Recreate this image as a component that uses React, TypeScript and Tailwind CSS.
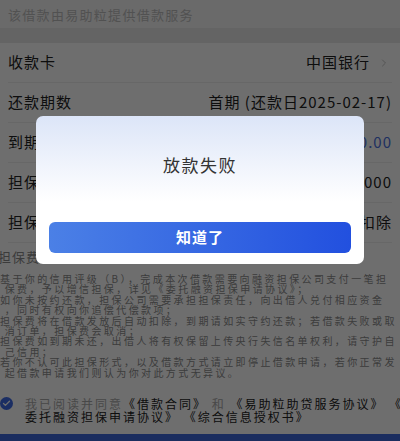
import { ChevronRight, Check } from 'lucide-react';

const ROWS = [
  { label: '收款卡', value: '中国银行', arrow: true },
  { label: '还款期数', value: '首期 (还款日2025-02-17)' },
  { label: '到期应还', value: '¥10,300.00', blue: true },
  { label: '担保费', value: '¥128.5000' },
  { label: '担保费扣除方式', value: '放款后自动扣除' },
];

const NOTICE = [
  '基于你的信用评级（B），完成本次借款需要向融资担保公司支付一笔担',
  ' 保费，予以增信担保，详见《委托融资担保申请协议》；',
  '如你未按约还款，担保公司需要承担担保责任，向出借人兑付相应资金',
  ' ，同时有权向你追偿代偿款项；',
  '担保费将在借款发放后自动扣除，到期请如实守约还款；若借款失败或取',
  ' 消订单，担保费会取消；',
  '担保费如到期未还，出借人将有权保留上传央行失信名单权利，请守护自',
  ' 己信用；',
  '若你不认可此担保形式，以及借款方式请立即停止借款申请，若你正常发',
  ' 起借款申请我们则认为你对此方式无异议。',
];

export default function App() {
  return (
    <div className="relative w-[400px] h-[441px] overflow-hidden bg-white font-['Noto_Sans_CJK_SC','Noto_Sans',sans-serif]">
      {/* 顶部提示 */}
      <div className="h-[28px] bg-[#f5f5f5] flex items-center px-2">
        <p className="text-[13px] tracking-[1.3px] text-[#bdbdbd] leading-none">该借款由易助粒提供借款服务</p>
      </div>
      <div className="h-[15px] bg-[#e8e8e8]" />

      {/* 借款信息 */}
      <div className="bg-white">
        {ROWS.map((row) => (
          <div key={row.label} className="h-[40px] mx-2 flex items-center justify-between border-b border-[#eeeeee]">
            <span className="text-[15px] tracking-[1px] text-[#222]">{row.label}</span>
            <span className="flex items-center gap-[8px]">
              <span className={`text-[15px] tracking-[1px] ${row.blue ? 'text-[#4a70e0]' : 'text-[#222]'}`}>{row.value}</span>
              {row.arrow && <ChevronRight size={12} strokeWidth={2} className="text-[#c4c4c4] mr-[2px]" />}
            </span>
          </div>
        ))}

        <p className="pt-[6px] text-[13px] leading-[16px] tracking-[1px] text-[#8a8a8a] -ml-[2px]">担保费</p>

        <div className="mt-[9px] text-[10px] leading-[10.4px] tracking-[2.4px] text-[#8c8c8c] whitespace-pre">
          {NOTICE.map((line, i) => (
            <p key={i}>{line}</p>
          ))}
        </div>

        {/* 协议勾选 */}
        <div className="mt-[19px] flex gap-[12px] text-[12px] leading-[13px] tracking-[2px] whitespace-nowrap">
          <span className="w-[13px] h-[13px] shrink-0 rounded-full bg-[#3f6be6] flex items-center justify-center">
            <Check size={9} strokeWidth={3.5} className="text-white" />
          </span>
          <div>
            <p>
              <span className="text-[#a8a8a8]">我已阅读并同意</span>
              <span className="text-[#222]">《借款合同》</span>
              <span className="text-[#a8a8a8]"> 和 </span>
              <span className="text-[#222]">《易助粒助贷服务协议》 《</span>
            </p>
            <p className="text-[#222]">委托融资担保申请协议》 《综合信息授权书》</p>
          </div>
        </div>

        <div className="mt-[11px] h-[14px] bg-[#4068dc]" />
      </div>

      {/* 遮罩与弹窗 */}
      <div className="fixed inset-0 bg-black/[0.57] flex justify-center pt-[116px]">
        <div className="w-[328px] h-[148px] rounded-[7px] bg-[linear-gradient(180deg,#dce5f8_0%,#ffffff_58%)] px-[13px] pt-[37px] flex flex-col">
          <p className="text-center text-[17px] leading-[24px] tracking-[1.5px] text-[#333]">放款失败</p>
          <button className="mt-[45px] h-[31px] w-full rounded-[6px] bg-[linear-gradient(90deg,#4b80e6,#2250df)] text-white text-[15px] font-semibold tracking-[1px]">
            知道了
          </button>
        </div>
      </div>
    </div>
  );
}
